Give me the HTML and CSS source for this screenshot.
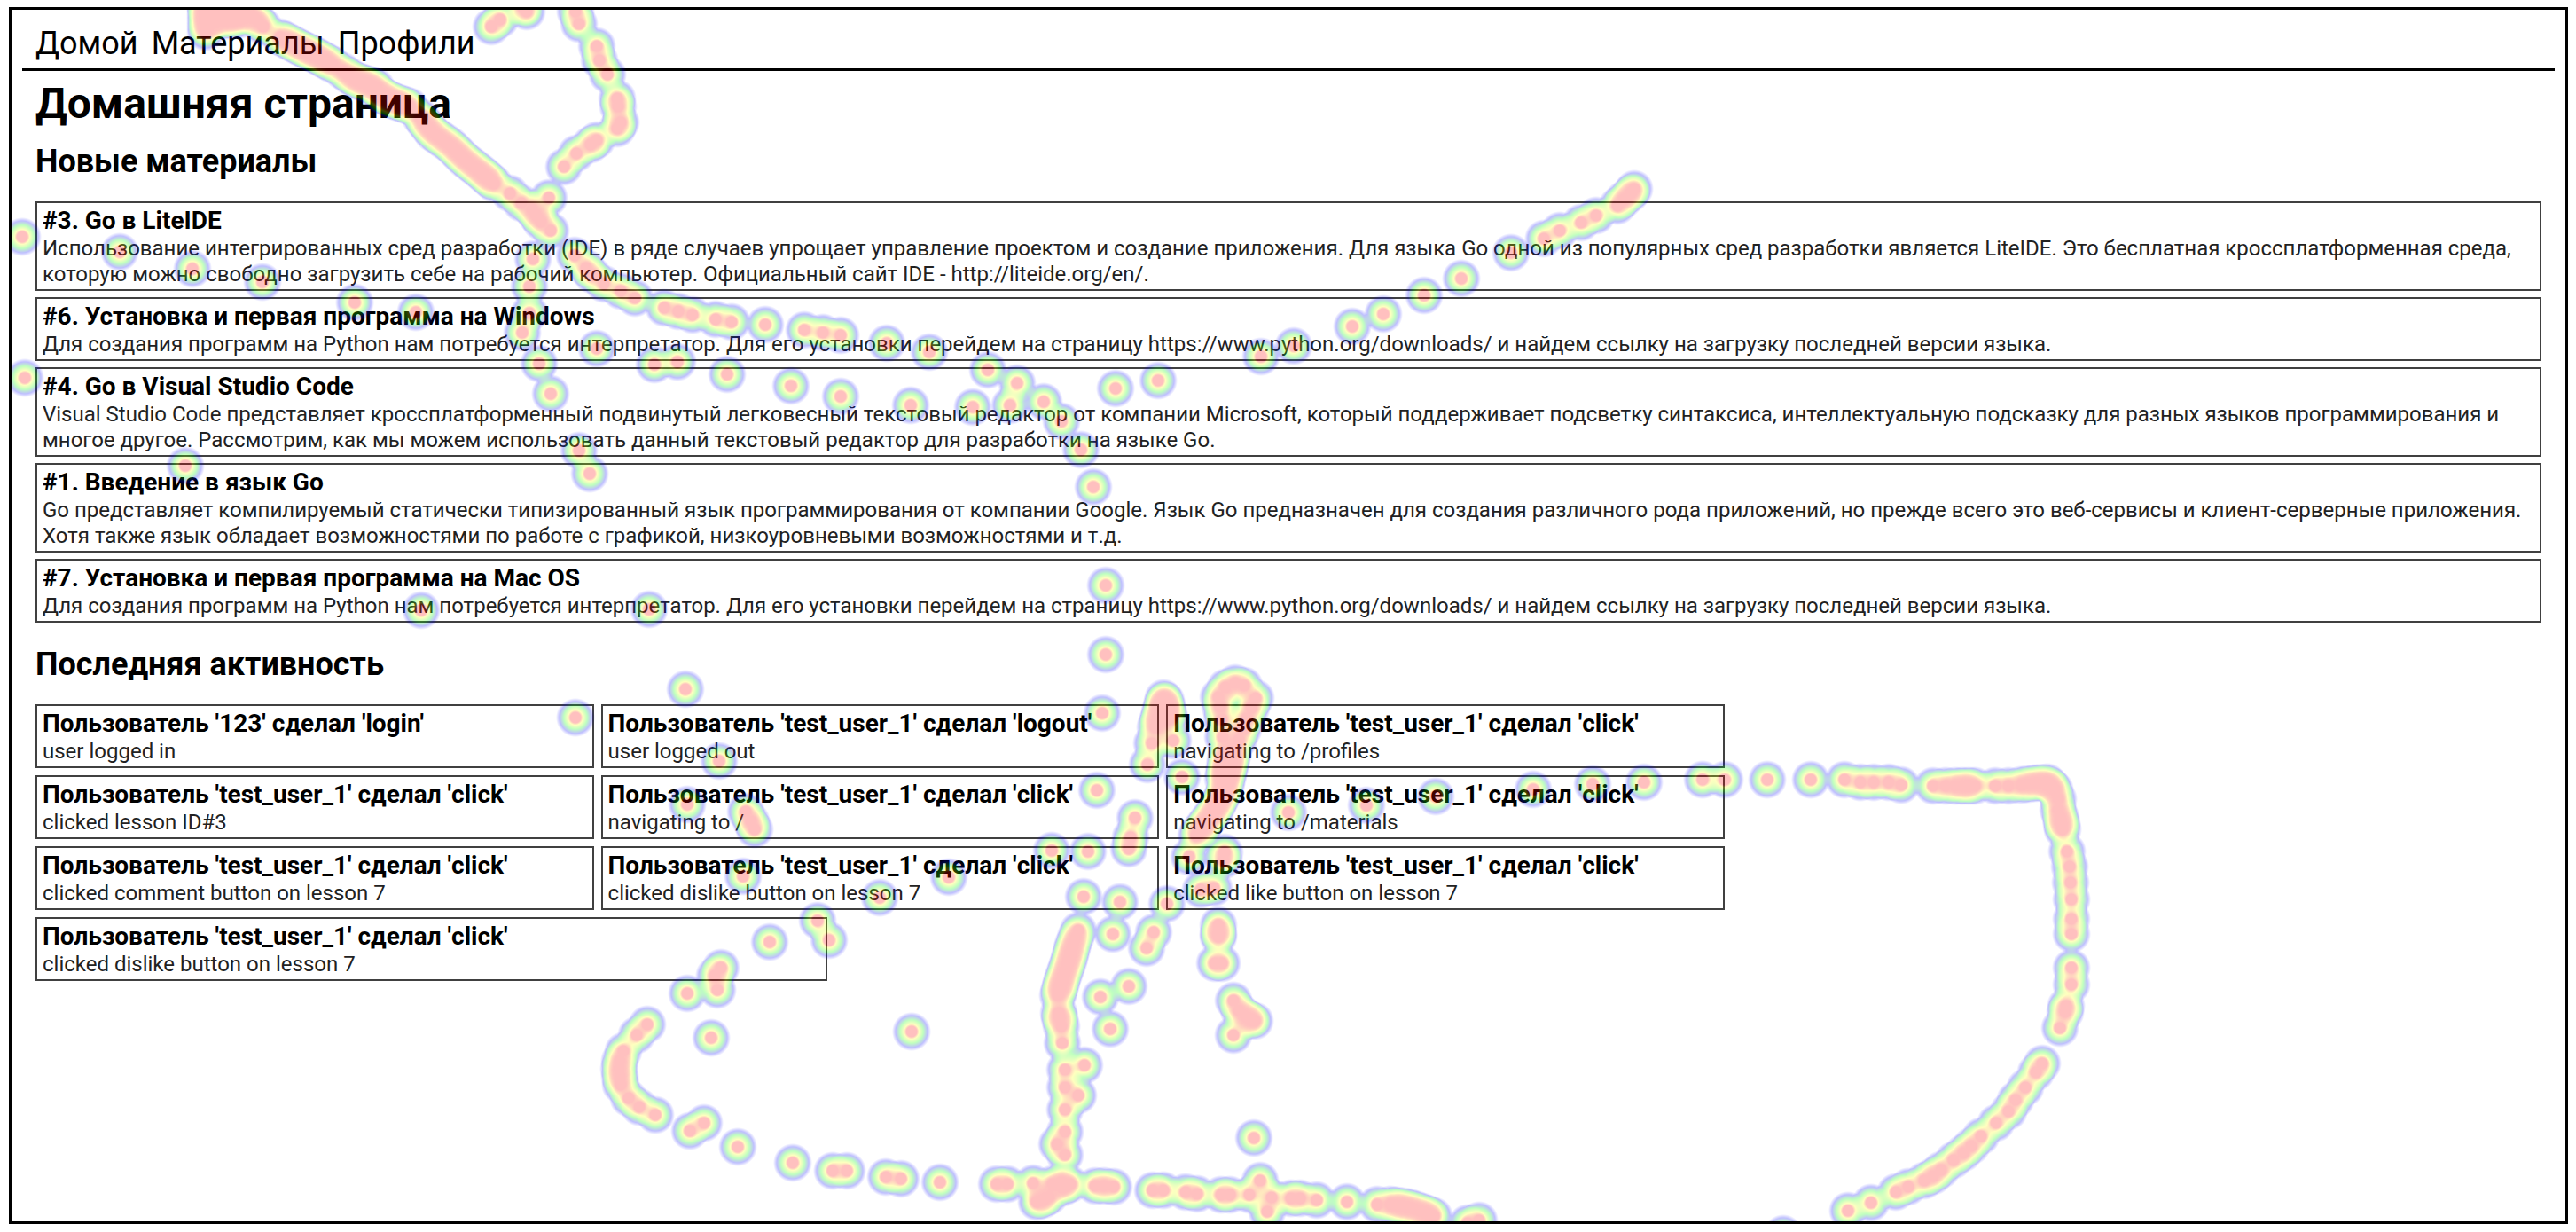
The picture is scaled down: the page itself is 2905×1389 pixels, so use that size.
FILE: index.html
```html
<!DOCTYPE html>
<html lang="ru">
<head>
<meta charset="utf-8">
<title>Домашняя страница</title>
<link rel="stylesheet" href="styles.css">
</head>
<body>
<div class="page">
  <nav class="nav">
    <a href="/">Домой</a>
    <a href="/materials">Материалы</a>
    <a href="/profiles">Профили</a>
  </nav>
  <main class="content">
    <h1>Домашняя страница</h1>
    <section class="section">
      <h2>Новые материалы</h2>
      <div class="materials">
        <article class="card"><h3>#3. Go в LiteIDE</h3><p>Использование интегрированных сред разработки (IDE) в ряде случаев упрощает управление проектом и создание приложения. Для языка Go одной из популярных сред разработки является LiteIDE. Это бесплатная кроссплатформенная среда, которую можно свободно загрузить себе на рабочий компьютер. Официальный сайт IDE - http://liteide.org/en/.</p></article>
        <article class="card"><h3>#6. Установка и первая программа на Windows</h3><p>Для создания программ на Python нам потребуется интерпретатор. Для его установки перейдем на страницу https://www.python.org/downloads/ и найдем ссылку на загрузку последней версии языка.</p></article>
        <article class="card"><h3>#4. Go в Visual Studio Code</h3><p>Visual Studio Code представляет кроссплатформенный подвинутый легковесный текстовый редактор от компании Microsoft, который поддерживает подсветку синтаксиса, интеллектуальную подсказку для разных языков программирования и многое другое. Рассмотрим, как мы можем использовать данный текстовый редактор для разработки на языке Go.</p></article>
        <article class="card"><h3>#1. Введение в язык Go</h3><p>Go представляет компилируемый статически типизированный язык программирования от компании Google. Язык Go предназначен для создания различного рода приложений, но прежде всего это веб-сервисы и клиент-серверные приложения. Хотя также язык обладает возможностями по работе с графикой, низкоуровневыми возможностями и т.д.</p></article>
        <article class="card"><h3>#7. Установка и первая программа на Mac OS</h3><p>Для создания программ на Python нам потребуется интерпретатор. Для его установки перейдем на страницу https://www.python.org/downloads/ и найдем ссылку на загрузку последней версии языка.</p></article>
      </div>
    </section>
    <section class="section">
      <h2>Последняя активность</h2>
      <div class="activity">
        <article class="card"><h3>Пользователь '123' сделал 'login'</h3><p>user logged in</p></article>
        <article class="card"><h3>Пользователь 'test_user_1' сделал 'logout'</h3><p>user logged out</p></article>
        <article class="card"><h3>Пользователь 'test_user_1' сделал 'click'</h3><p>navigating to /profiles</p></article>
        <article class="card"><h3>Пользователь 'test_user_1' сделал 'click'</h3><p>clicked lesson ID#3</p></article>
        <article class="card"><h3>Пользователь 'test_user_1' сделал 'click'</h3><p>navigating to /</p></article>
        <article class="card"><h3>Пользователь 'test_user_1' сделал 'click'</h3><p>navigating to /materials</p></article>
        <article class="card"><h3>Пользователь 'test_user_1' сделал 'click'</h3><p>clicked comment button on lesson 7</p></article>
        <article class="card"><h3>Пользователь 'test_user_1' сделал 'click'</h3><p>clicked dislike button on lesson 7</p></article>
        <article class="card"><h3>Пользователь 'test_user_1' сделал 'click'</h3><p>clicked like button on lesson 7</p></article>
        <article class="card card-last"><h3>Пользователь 'test_user_1' сделал 'click'</h3><p>clicked dislike button on lesson 7</p></article>
      </div>
    </section>
  </main>
  <canvas class="heatmap" id="heatmap"></canvas>
</div>
<script src="heatmap.js"></script>
</body>
</html>
```
FILE: styles.css
```css
* {
  box-sizing: border-box;
}

body {
  margin: 0;
  padding: 8px 9px 9px 10px;
  min-height: 100vh;
  display: flex;
  background: #fff;
  color: #000;
  font-family: Roboto, sans-serif;
}

.page {
  position: relative;
  flex: 1;
  min-width: 0;
  padding: 12px;
  border: 3px solid #000;
}

.nav {
  display: flex;
  gap: 15px;
  padding: 5px 15px 7px;
  border-bottom: 3px solid #000;
  font-size: 36px;
  line-height: 42px;
}

.nav a {
  color: inherit;
  text-decoration: none;
}

.content {
  padding: 9px 15px;
}

h1,
h2,
h3,
p {
  margin: 0;
}

h1 {
  margin-bottom: 16px;
  font-size: 48px;
  line-height: 56px;
}

h2 {
  margin-bottom: 24px;
  font-size: 36px;
  line-height: 42px;
}

h3 {
  font-size: 28px;
  line-height: 34px;
}

p {
  color: #222;
  font-size: 24px;
  line-height: 29px;
}

.section + .section {
  margin-top: 26px;
}

.materials {
  display: flex;
  flex-direction: column;
  gap: 7px;
}

.activity {
  display: flex;
  flex-wrap: wrap;
  gap: 8px;
  width: 67.4%;
}

.activity .card {
  width: calc((100% - 16px) / 3);
}

.activity .card-last {
  width: 46.9%;
}

.card {
  padding: 3px 6px 2px;
  border: 2px solid #404040;
}

.heatmap {
  position: absolute;
  inset: 0;
  width: 100%;
  height: 100%;
  pointer-events: none;
}
```
FILE: heatmap.js
```js
// Cursor positions, in window coordinates.
const points = [
  [25,267],[135,284],[217,303],[296,318],[400,341],[469,352],[28,426],[209,525],[475,688],[732,687],[773,777],[649,809],
  [594,13],[590,8],[564,22],[554,30],
  [649,13],[653,27],[673,52],[676,68],[685,84],[696,111],[697,120],[700,138],[696,145],[673,158],[666,163],[650,173],[636,188],
  [575,218],[588,229],[619,223],[600,236],[605,243],[610,250],[621,260],
  [601,292],[597,323],[597,353],[589,375],[608,410],[621,444],[653,508],[665,534],[673,393],
  [648,288],[661,302],[668,310],[681,320],[700,328],[716,336],[749,347],[765,351],[781,355],[807,360],[825,363],[863,366],
  [907,372],[928,375],[948,378],[1000,387],[1048,397],[1114,417],[1147,432],[1139,457],[1177,453],[1197,475],[1097,459],[1027,457],
  [948,447],[892,435],[820,422],[764,408],[738,411],[1258,438],[1306,429],[1422,402],[1459,390],
  [1525,368],[1560,354],[1606,333],[1648,314],[1704,285],[1741,269],[1759,260],[1783,251],[1800,243],[1824,232],[1831,225],[1839,218],[1843,213],
  [1219,507],[1233,549],[1247,660],[1247,738],[1243,804],[1237,891],[1294,862],[1333,876],[1299,838],[1323,835],
  [811,858],[775,907],[841,915],[847,926],[851,935],[838,988],[1070,989],[992,1012],[922,1038],[935,1060],[868,1062],
  [813,1091],[806,1100],[809,1116],[775,1120],[802,1170],[730,1155],[718,1167],[703,1185],[699,1196],[698,1205],[699,1214],[700,1223],
  [709,1238],[721,1248],[739,1257],[778,1275],[794,1266],[832,1293],[894,1311],[939,1320],[955,1320],[999,1327],[1016,1329],[1060,1333],
  [1124,1335],[1136,1335],[1165,1334],[1187,1335],[1197,1333],[1207,1335],[1199,1339],[1183,1349],[1176,1353],[1169,1355],[1235,1337],[1245,1337],[1256,1338],
  [1201,1302],[1192,1290],[1201,1276],[1201,1251],[1216,1235],[1201,1226],[1201,1206],[1223,1201],[1198,1176],[1197,1157],[1195,1148],[1194,1142],
  [1222,1011],[1263,1017],[1255,1053],[1316,1019],[1301,1051],[1293,1069],[1273,1112],[1241,1124],[1252,1160],[1186,959],[1227,960],
  [1280,922],[1275,944],[1273,957],[1028,1163],
  [1374,786],[1376,797],[1378,811],[1379,831],[1382,775],[1393,770],[1403,773],[1416,787],[1411,798],[1406,810],[1402,822],[1397,834],
  [1341,966],[1381,961],[1380,970],[1369,1001],[1354,1003],[1374,1043],[1374,1052],[1374,1056],[1370,1086],[1378,1086],
  [1391,1128],[1397,1139],[1405,1146],[1415,1151],[1410,1150],[1391,1167],[1414,1283],
  [1300,1342],[1312,1342],[1337,1344],[1350,1346],[1377,1347],[1387,1347],[1409,1347],[1421,1331],[1434,1350],[1429,1366],
  [1456,1351],[1466,1351],[1485,1353],[1519,1355],[1553,1358],[1655,1379],[1668,1376],
  [1453,916],[1541,908],[1619,898],[1729,890],[1796,884],[1854,882],[1920,879],[1945,879],[1993,879],[2042,879],
  [2080,879],[2098,882],[2113,882],[2130,882],[2144,885],[2180,886],[2194,886],[2205,886],[2213,886],[2220,886],[2227,886],[2250,886],[2265,886],
  [2321,901],[2321,913],[2324,922],[2325,929],[2326,935],[2331,960],[2334,977],[2335,995],[2336,1014],[2336,1036],[2336,1053],
  [2336,1091],[2336,1110],[2330,1134],[2329,1141],[2323,1159],[2303,1199],[2296,1209],[2284,1226],[2273,1240],[2265,1253],
  [2251,1266],[2234,1281],[2223,1292],[2214,1300],[2203,1308],[2189,1319],[2180,1326],[2170,1331],[2152,1338],[2138,1344],[2110,1356],[2084,1365],[2011,1391]
];

// Slow movements: sampled every few pixels along each line.
const trails = [
  [[232,8],[262,14],[285,18],[297,30]],
  [[232,10],[232,36]],
  [[240,24],[270,22]],
  [[316,42],[335,52],[357,63],[375,73]],
  [[386,80],[400,90],[412,94],[424,98]],
  [[428,106],[444,114],[462,120]],
  [[474,132],[488,150],[508,164],[524,180],[542,194],[557,207]],
  [[1312,787],[1307,807],[1303,820]],
  [[1315,790],[1319,810]],
  [[1391,846],[1386,870],[1381,892],[1370,914],[1349,942]],
  [[1383,850],[1379,878]],
  [[1216,1049],[1210,1065],[1205,1084],[1198,1104],[1193,1122]],
  [[1568,1358],[1589,1361],[1604,1366],[1617,1371]],
  [[2279,885],[2295,883],[2309,882],[2317,890]]
];

const RADIUS = 22;
const CORE = 6;
const STEP = 7;
const MAX_OPACITY = 0.25;

function sampleTrail(trail) {
  const samples = [trail[0]];
  for (let i = 1; i < trail.length; i++) {
    const [x0, y0] = trail[i - 1];
    const [x1, y1] = trail[i];
    const count = Math.max(1, Math.round(Math.hypot(x1 - x0, y1 - y0) / STEP));
    for (let k = 1; k <= count; k++) {
      samples.push([x0 + (x1 - x0) * k / count, y0 + (y1 - y0) * k / count]);
    }
  }
  return samples;
}

function buildPalette() {
  const canvas = document.createElement('canvas');
  canvas.width = 256;
  canvas.height = 1;
  const ctx = canvas.getContext('2d');
  const gradient = ctx.createLinearGradient(0, 0, 256, 0);
  gradient.addColorStop(0.25, 'rgb(0,0,255)');
  gradient.addColorStop(0.55, 'rgb(0,255,0)');
  gradient.addColorStop(0.85, 'rgb(255,255,0)');
  gradient.addColorStop(1, 'rgb(255,0,0)');
  ctx.fillStyle = gradient;
  ctx.fillRect(0, 0, 256, 1);
  return ctx.getImageData(0, 0, 256, 1).data;
}

function drawHeatmap() {
  const canvas = document.getElementById('heatmap');
  const box = canvas.getBoundingClientRect();
  canvas.width = Math.round(box.width);
  canvas.height = Math.round(box.height);
  const ctx = canvas.getContext('2d');
  const all = points.concat(...trails.map(sampleTrail));

  for (const [px, py] of all) {
    const x = px - box.left;
    const y = py - box.top;
    const spot = ctx.createRadialGradient(x, y, CORE, x, y, RADIUS);
    spot.addColorStop(0, 'rgba(0,0,0,1)');
    spot.addColorStop(1, 'rgba(0,0,0,0)');
    ctx.fillStyle = spot;
    ctx.fillRect(x - RADIUS, y - RADIUS, RADIUS * 2, RADIUS * 2);
  }

  const image = ctx.getImageData(0, 0, canvas.width, canvas.height);
  const data = image.data;
  const palette = buildPalette();
  const maxAlpha = Math.round(MAX_OPACITY * 255);
  for (let i = 0; i < data.length; i += 4) {
    const value = data[i + 3];
    if (value) {
      data[i] = palette[value * 4];
      data[i + 1] = palette[value * 4 + 1];
      data[i + 2] = palette[value * 4 + 2];
      data[i + 3] = Math.min(value, maxAlpha);
    }
  }
  ctx.putImageData(image, 0, 0);
}

drawHeatmap();
window.addEventListener('resize', drawHeatmap);
```
